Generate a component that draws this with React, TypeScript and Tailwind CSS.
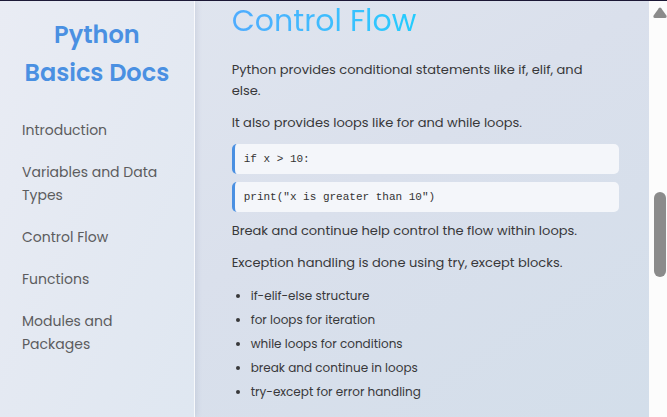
import type { ReactNode } from "react";

const topics = [
  "Introduction",
  "Variables and Data Types",
  "Control Flow",
  "Functions",
  "Modules and Packages",
];

const points = [
  "if-elif-else structure",
  "for loops for iteration",
  "while loops for conditions",
  "break and continue in loops",
  "try-except for error handling",
];

function CodeLine({ children }: { children: ReactNode }) {
  return (
    <pre className="rounded-[5px] border-l-3 border-[#4a90e2] bg-[#f4f6fa] px-[9px] py-[7px] font-['Courier_New','Liberation_Mono',monospace] text-[11px] leading-4 text-[#333]">
      <code className="font-[inherit]">{children}</code>
    </pre>
  );
}

function Sidebar() {
  return (
    <aside className="w-[30%] shrink-0 border-r border-white/70 bg-linear-to-br from-[#e9ecf4] via-[#e4e9f2] to-[#dfe7f1] px-[22px] pt-[15px] shadow-[1px_0_6px_rgba(70,80,120,0.15)]">
      <h1 className="-mx-2 text-center text-[24px] leading-[38px] font-semibold text-[#4a90e2]">
        Python
        <br />
        Basics Docs
      </h1>
      <nav className="mt-[27px]">
        <ul className="flex flex-col gap-[19px]">
          {topics.map((topic) => (
            <li key={topic}>
              <a href="#control-flow" className="block text-[14px] leading-[23px] text-[#5c5c5e]">
                {topic}
              </a>
            </li>
          ))}
        </ul>
      </nav>
    </aside>
  );
}

function Scrollbar() {
  return (
    <div aria-hidden="true" className="flex w-[18px] shrink-0 flex-col items-center bg-[#fcfcfc] pt-[6px] pl-1">
      <svg viewBox="0 0 14 11" className="h-[11px] w-[14px]" fill="#8b8b8b">
        <path d="M5.8 1.2Q7 0 8.2 1.2L13.4 8.6Q14.2 11 12 11H2Q-.2 11 .6 8.6Z" />
      </svg>
      <div className="mt-[174px] h-[85px] w-3 rounded-full bg-[#8b8b8b]" />
    </div>
  );
}

export default function App() {
  return (
    <div className="flex min-h-screen border-t border-[#1b1735] font-[Poppins,Inter,sans-serif]">
      <div className="flex min-w-0 flex-1 bg-linear-to-br from-[#e2e7f0] via-[#dae0ec] to-[#d3deea]">
        <Sidebar />
        <main id="control-flow" className="min-w-0 flex-1 pr-[30px] pl-[37px] text-[13px] leading-[21px] text-[#38383a]">
          <h2 className="w-fit bg-linear-to-r from-[#4facfe] to-[#22ccfe] bg-clip-text text-[30px] leading-10 text-transparent">
            Control Flow
          </h2>
          <div className="mt-[18px] flex flex-col gap-[11px] pr-5">
            <p>Python provides conditional statements like if, elif, and else.</p>
            <p>It also provides loops like for and while loops.</p>
          </div>
          <div className="mt-[11px] mb-2 flex flex-col gap-2">
            <CodeLine>if x &gt; 10:</CodeLine>
            <CodeLine>print("x is greater than 10")</CodeLine>
          </div>
          <div className="flex flex-col gap-[11px]">
            <p>Break and continue help control the flow within loops.</p>
            <p>Exception handling is done using try, except blocks.</p>
          </div>
          <ul className="mt-[11px] list-disc pl-[19px] text-[12px] leading-6">
            {points.map((point) => (
              <li key={point}>{point}</li>
            ))}
          </ul>
        </main>
      </div>
      <Scrollbar />
    </div>
  );
}
